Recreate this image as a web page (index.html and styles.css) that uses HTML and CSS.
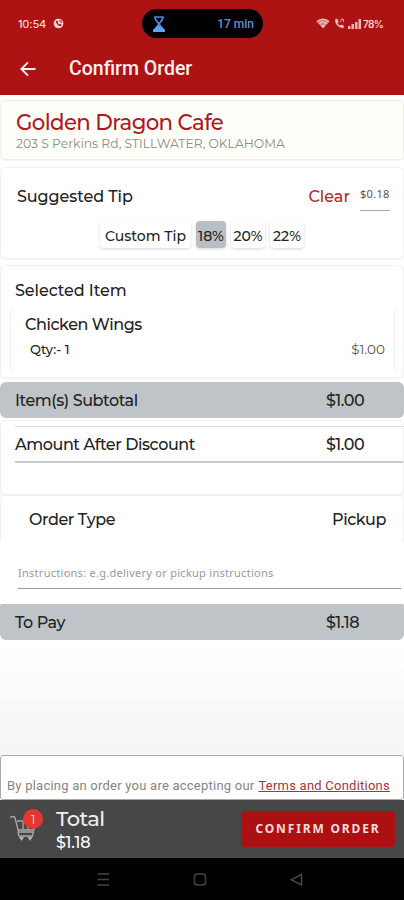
FILE: index.html
```
<!DOCTYPE html>
<html lang="en">
<head>
<meta charset="utf-8">
<title>Confirm Order</title>
<link rel="stylesheet" href="styles.css">
</head>
<body>
<header class="top">
  <div class="status">
    <span class="clock">10:54</span>
    <svg class="dial" viewBox="0 0 12 12"><circle cx="6" cy="6" r="5.3" fill="#f6d0cc"/><path d="M3.2 3.2c0 3 2.6 5.4 5.4 5.600l.5-1.600-1.800-.8-.8.7-1.600-1.600.7-.9-.7-1.700z" fill="#ae1313"/><path d="M6.600 3.100h2.300v2.300" stroke="#ae1313" fill="none"/></svg>
    <div class="timer">
      <svg viewBox="0 0 14 18"><path d="M2 2h10M3 2c0 4 3 5 4 7 1-2 4-3 4-7M3 16c0-4 3-5 4-7 1 2 4 3 4 7" fill="none" stroke="#4f86d6" stroke-width="1.700"/><path d="M1 17v-2c1-2 4-2.500 6-4.500 2 2 5 2.500 6 4.500v2z" fill="#62a2fb"/></svg>
      <span>17 min</span>
    </div>
    <svg class="wifi" viewBox="0 0 14 11"><path d="M.5 3.400C4-.1 10-.1 13.500 3.400L7 10.500z" fill="#dd8580"/><path d="M1 3.600C4.500.400 9.500.400 13 3.600M3 5.700c2.300-2 5.700-2 8 0" fill="none" stroke="#f7c4bf" stroke-width="1.200"/><path d="M5 7.500q2-1.500 4 0L7 10z" fill="#f7c4bf"/></svg>
    <svg class="call" viewBox="0 0 11 11"><path d="M1.500 1.200C1 6 4.500 9.700 9.300 9.700V7.600L7 7 6 8C4.700 7.300 3.800 6.200 3.200 5L4.200 4 3.500 1.200z" fill="#f7c4bf" stroke="#f7c4bf" stroke-width=".6"/><path d="M5.500 4.500 9 1.300M6.500 1.200h3v2.700" fill="none" stroke="#e59a95"/></svg>
    <svg class="signal" viewBox="0 0 14 10"><path d="M0 7h2.500v3H0zM3.500 5H6v5H3.500zM7 3h2.500v7H7zM10.500 0H13v10h-2.500z" fill="#f3b5b0"/></svg>
    <span class="battery">78%</span>
  </div>
  <div class="appbar">
    <svg viewBox="0 0 16 16"><path d="M15.500 8H1.500M8 1.300 1.300 8 8 14.700" fill="none" stroke="#fff0ee" stroke-width="1.900"/></svg>
    <h1>Confirm Order</h1>
  </div>
</header>

<main>
  <section class="card cafe">
    <h2>Golden Dragon Cafe</h2>
    <p>203 S Perkins Rd, STILLWATER, OKLAHOMA</p>
  </section>

  <section class="card tip">
    <div class="tip-head">
      <span class="label tip-label">Suggested Tip</span>
      <span class="clear">Clear</span>
      <span class="tip-value">$0.18</span>
    </div>
    <div class="chips">
      <span class="chip custom">Custom Tip</span>
      <span class="chip on">18%</span>
      <span class="chip">20%</span>
      <span class="chip">22%</span>
    </div>
  </section>

  <section class="card items">
    <span class="label items-label">Selected Item</span>
    <div class="item">
      <div class="label item-name">Chicken Wings</div>
      <div class="item-row"><span class="qty">Qty:- 1</span><span class="price">$1.00</span></div>
    </div>
  </section>

  <div class="bar"><span class="label">Item(s) Subtotal</span><span class="label amount">$1.00</span></div>

  <section class="card discount">
    <div class="discount-row"><span class="label">Amount After Discount</span><span class="label amount">$1.00</span></div>
  </section>

  <section class="card type"><span class="label">Order Type</span><span class="label">Pickup</span></section>

  <div class="instructions"><span>Instructions: e.g.delivery or pickup instructions</span></div>

  <div class="bar pay"><span class="label">To Pay</span><span class="label amount">$1.18</span></div>
</main>

<div class="terms"><span class="terms-text">By placing an order you are accepting our</span><a class="terms-link">Terms and Conditions</a></div>

<footer class="checkout">
  <div class="cart">
    <svg viewBox="0 0 27 28"><path d="M0 3.500q3-2 5 0l3.500 14.500H24M7 7h17v9H8.500M13 8v8M18 8v8M8 18l1 4h13.500l1-4" fill="none" stroke="#aaa" stroke-width="1.300"/><path d="M9 23h5l-2.500 4zM17.500 23h5L20 27z" fill="#b5b5b5"/></svg>
    <span class="badge">1</span>
  </div>
  <div class="sum"><span class="sum-label">Total</span><span class="sum-value">$1.18</span></div>
  <button class="confirm">CONFIRM ORDER</button>
</footer>

<nav class="sysnav">
  <svg viewBox="0 0 14 14"><path d="M1.500 2h11.500M1.500 7.500h11.500M1.500 13h11.500" stroke="#444" stroke-width="1.400"/></svg>
  <svg viewBox="0 0 14 14"><rect x="1.500" y="2" width="11" height="11" rx="3" fill="none" stroke="#444" stroke-width="1.400"/></svg>
  <svg viewBox="0 0 14 14"><path d="M11.500 2.500v10.400L1 7.700z" fill="none" stroke="#4c4c4c" stroke-width="1.400"/></svg>
</nav>
</body>
</html>
```
FILE: styles.css
```
* { box-sizing: border-box; }
body {
  margin: 0;
  width: 404px;
  height: 900px;
  display: flex;
  flex-direction: column;
  overflow: hidden;
  background: #fff;
  color: #222;
  font-family: Montserrat, Inter, sans-serif;
  white-space: nowrap;
}
h1, h2, p { margin: 0; }
svg { display: block; flex: none; }

.top { height: 95px; background: #ae1313; flex: none; }
.status { height: 47px; display: flex; align-items: center; padding-left: 18px; color: #f8d4d0; }
.clock { width: 29px; font: 500 11px/14px Inter, sans-serif; letter-spacing: -0.2px; }
.dial { width: 11px; height: 11px; margin-left: 6px; }
.timer {
  width: 121px; height: 29px; margin-left: 78px; padding: 0 9px 0 10px;
  border-radius: 15px; background: #000;
  display: flex; align-items: center; justify-content: space-between;
  font: 500 12px/16px Roboto, sans-serif; letter-spacing: 0; color: #6190d2;
}
.timer svg { width: 14px; height: 18px; }
.wifi { width: 14px; height: 11px; margin-left: 53px; }
.call { width: 11px; height: 11px; margin-left: 4px; }
.signal { width: 14px; height: 10px; margin-left: 3px; }
.battery { margin-left: 1px; font: 600 10px/14px Inter, sans-serif; letter-spacing: -0.6px; }
.appbar { height: 44px; display: flex; align-items: center; padding-left: 20px; }
.appbar svg { width: 16px; height: 16px; }
.appbar h1 { margin-left: 33px; font: 500 19.500px/24px Roboto, sans-serif; color: #fff0ee; }

main { height: 660px; padding-top: 5px; background: linear-gradient(#fff 550px, #f5f5f5 655px); }
.card { border: 1px solid #f0f0f1; border-radius: 5px; background: #fff; box-shadow: 0 1px 2px #e9ebeb80; }
.label { padding-top: 1px; font-size: 16px; font-weight: 500; line-height: 20px; letter-spacing: -0.430px; }

.cafe { height: 60px; padding: 9px 15px; background: #fffffa; border-color: #eeeee9; }
.cafe h2 { font-size: 21.300px; line-height: 24px; font-weight: 500; letter-spacing: -0.620px; color: #ae191c; }
.cafe p { margin-top: 2px; font-size: 12.350px; line-height: 16px; color: #8b8b86; }

.tip { height: 92px; margin-top: 7px; padding: 14px 13px 0 16px; }
.tip-head { display: flex; align-items: flex-start; height: 30px; padding-top: 4px; }
.tip-label { letter-spacing: -0.080px; }
.clear { margin-left: auto; padding-top: 1px; font-size: 16px; font-weight: 500; line-height: 20px; color: #b7282a; }
.tip-value { width: 30px; height: 25px; margin-left: 10px; border-bottom: 1px solid #a9a9a9; font: 11px/16px "Noto Sans", sans-serif; letter-spacing: 0.3px; color: #555; }
.chips { display: flex; gap: 5px; padding: 9px 0 0 83px; }
.chip { width: 34px; height: 27px; padding-top: 2px; border-radius: 4px; background: #fff; box-shadow: 0 1px 3px #bbb9; font-size: 14px; font-weight: 500; line-height: 27px; text-align: center; }
.custom { width: 91px; }
.chip.on { width: 30px; background: #b9bfc3; }

.items { height: 113px; margin-top: 6px; padding: 14px 8px 0 9px; }
.items-label { display: block; padding-left: 5px; letter-spacing: -0.080px; }
.item { height: 62px; margin-top: 8px; padding: 5px 9px 0 14px; border: solid #ececec; border-width: 0 1px; }
.item-row { display: flex; justify-content: space-between; padding: 4px 0 0 5px; font-size: 13px; font-weight: 500; line-height: 20px; }
.price { font-size: 13.500px; font-weight: 400; color: #555; }

.bar { height: 36px; margin-top: 4px; padding: 0 40px 0 15px; display: flex; align-items: center; border-radius: 6px; background: #bec4c7; }
.amount { width: 38px; margin-left: auto; }

.discount { height: 75px; margin-top: 2px; padding: 5px 0 0 14px; }
.discount-row { height: 37px; display: flex; align-items: center; padding-right: 39px; border-top: 1px solid #dfdfdf; border-bottom: 2px solid #cacaca; }
.type { height: 50px; display: flex; align-items: center; justify-content: space-between; padding: 0 17px 2px 28px; border-bottom-color: #fff; box-shadow: none; }
.instructions { height: 44px; margin: 0 3px 0 18px; padding-top: 19px; border-bottom: 1px solid #999; font: 11px/18px "Noto Sans", sans-serif; letter-spacing: 0.270px; color: #999; }
.pay { margin-top: 15px; border-radius: 2px 2px 6px 6px; }

.terms { height: 45px; flex: none; padding: 20px 0 0 6px; border: 1px solid #aaa; border-radius: 3px; background: #fff; display: flex; font: 13px/20px Roboto, sans-serif; letter-spacing: 0.230px; color: #858585; }
.terms-link { margin-left: 4px; color: #aa3338; text-decoration: underline; }

.checkout { height: 58px; flex: none; display: flex; padding: 0 9px 0 10px; background: #474747; }
.cart { position: relative; width: 46px; padding-top: 14px; }
.cart svg { width: 27px; height: 28px; }
.badge { position: absolute; left: 13px; top: 9px; width: 20px; height: 20px; border-radius: 50%; background: #e5372f; color: #fbd8d4; font-size: 13px; line-height: 21px; text-align: center; }
.sum { display: flex; flex-direction: column; padding-top: 7px; color: #eee; }
.sum-label { font-size: 21px; font-weight: 500; line-height: 24px; letter-spacing: -0.500px; }
.sum-value { padding-top: 1px; font-size: 16px; line-height: 22px; font-weight: 500; letter-spacing: -0.200px; color: #fff; }
.confirm { width: 154px; height: 36px; margin: 11px 0 0 auto; padding: 0; border: 0; border-radius: 4px; background: #ad1013; color: #f7dcda; font: 700 12px/34px "Noto Sans", sans-serif; letter-spacing: 1.850px; }
.sysnav { height: 42px; flex: none; display: flex; align-items: center; gap: 83px; padding-left: 96px; background: #000; }
.sysnav svg { width: 14px; height: 14px; }
```
